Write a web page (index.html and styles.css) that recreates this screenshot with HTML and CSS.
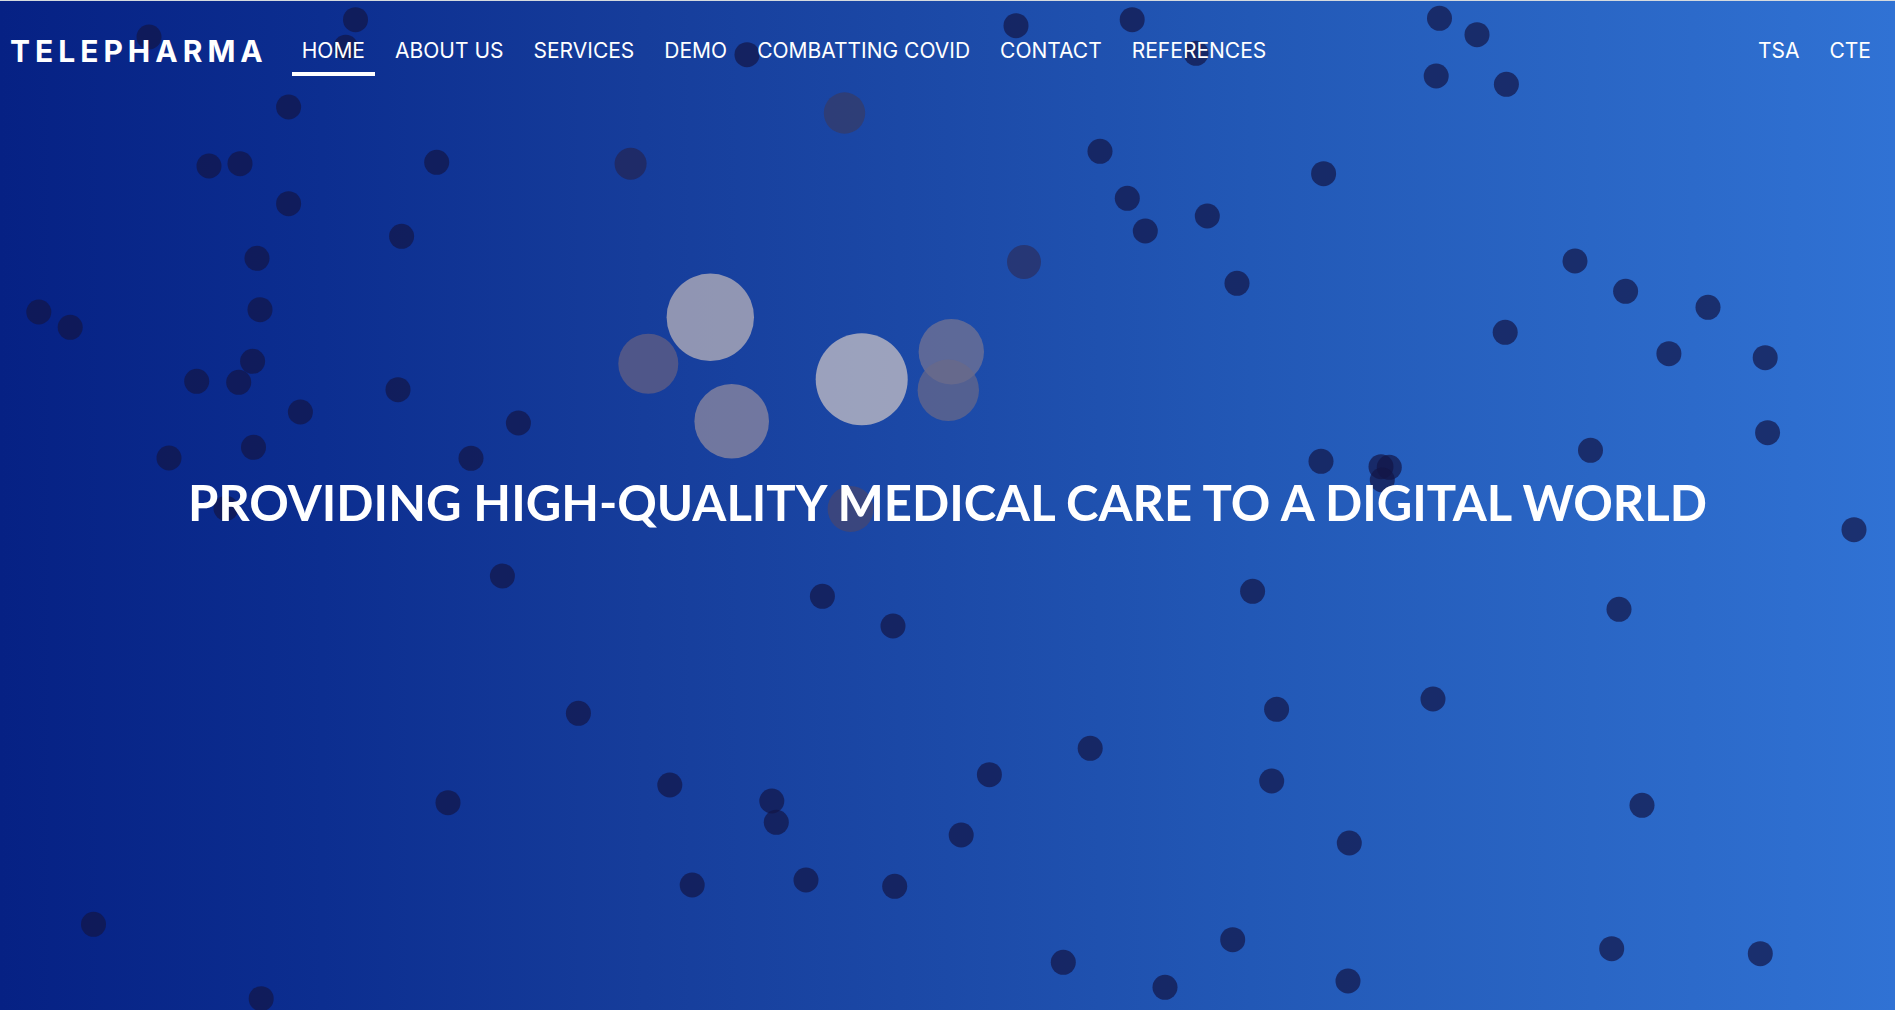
FILE: index.html
```html
<!DOCTYPE html>
<html lang="en">
<head>
<meta charset="utf-8">
<title>Telepharma</title>
<link rel="stylesheet" href="styles.css">
</head>
<body>
<div class="page">
  <svg class="bubbles" viewBox="0 0 1895 1010" preserveAspectRatio="xMidYMid slice" aria-hidden="true">
    <g class="bubbles-small">
      <circle cx="149" cy="37" r="12.5"/><circle cx="355.500" cy="19.700" r="12.500"/><circle cx="345.700" cy="47.300" r="12.500"/>
      <circle cx="288.600" cy="107" r="12.500"/><circle cx="209" cy="166" r="12.500"/><circle cx="240" cy="163.700" r="12.500"/>
      <circle cx="436.700" cy="162.300" r="12.500"/><circle cx="288.600" cy="203.700" r="12.500"/><circle cx="401.600" cy="236.300" r="12.500"/>
      <circle cx="257" cy="258.300" r="12.500"/><circle cx="260" cy="309.700" r="12.500"/><circle cx="38.800" cy="312" r="12.500"/>
      <circle cx="70.200" cy="327.300" r="12.500"/><circle cx="747" cy="54.700" r="12.500"/><circle cx="1016" cy="25.700" r="12.500"/>
      <circle cx="1132.200" cy="19.700" r="12.500"/><circle cx="1196" cy="53.300" r="12.500"/><circle cx="1100" cy="151.300" r="12.500"/>
      <circle cx="1127.300" cy="198.300" r="12.500"/><circle cx="1145.300" cy="231" r="12.500"/><circle cx="1207.300" cy="216" r="12.500"/>
      <circle cx="1237" cy="283.300" r="12.500"/><circle cx="1439.500" cy="18.300" r="12.500"/><circle cx="1477" cy="34.700" r="12.500"/>
      <circle cx="1436.200" cy="76" r="12.500"/><circle cx="1506.400" cy="84.300" r="12.500"/><circle cx="1323.600" cy="173.700" r="12.500"/>
      <circle cx="1575" cy="261" r="12.500"/><circle cx="1625.600" cy="291.300" r="12.500"/><circle cx="1708" cy="307.300" r="12.500"/>
      <circle cx="1505.200" cy="332.300" r="12.500"/><circle cx="252.600" cy="361.300" r="12.500"/><circle cx="196.700" cy="381.300" r="12.500"/>
      <circle cx="238.700" cy="382.300" r="12.500"/><circle cx="300.400" cy="412" r="12.500"/><circle cx="398" cy="389.700" r="12.500"/>
      <circle cx="518.400" cy="423" r="12.500"/><circle cx="169" cy="458" r="12.500"/><circle cx="253.500" cy="447.300" r="12.500"/>
      <circle cx="471" cy="458.300" r="12.500"/><circle cx="226" cy="508.300" r="12.500"/><circle cx="502.400" cy="576" r="12.500"/>
      <circle cx="822.400" cy="596.300" r="12.500"/><circle cx="893" cy="626" r="12.500"/><circle cx="1252.600" cy="591.300" r="12.500"/>
      <circle cx="1668.900" cy="353.700" r="12.500"/><circle cx="1765.200" cy="357.700" r="12.500"/><circle cx="1767.600" cy="432.700" r="12.500"/>
      <circle cx="1590.500" cy="450.300" r="12.500"/><circle cx="1321" cy="461.300" r="12.500"/><circle cx="1381" cy="466.700" r="12.500"/>
      <circle cx="1389.300" cy="467.300" r="12.500"/><circle cx="1382.300" cy="480" r="12.500"/><circle cx="1854" cy="529.700" r="12.500"/>
      <circle cx="1619" cy="609.300" r="12.500"/><circle cx="578.400" cy="713.300" r="12.500"/><circle cx="448" cy="802.700" r="12.500"/>
      <circle cx="93.500" cy="924.300" r="12.500"/><circle cx="261.200" cy="998.700" r="12.500"/><circle cx="669.800" cy="785" r="12.500"/>
      <circle cx="771.800" cy="801" r="12.500"/><circle cx="776.300" cy="822.300" r="12.500"/><circle cx="692.200" cy="885" r="12.500"/>
      <circle cx="806" cy="880" r="12.500"/><circle cx="894.700" cy="886.300" r="12.500"/><circle cx="961.200" cy="835" r="12.500"/>
      <circle cx="989.400" cy="774.700" r="12.500"/><circle cx="1090.200" cy="748.300" r="12.500"/><circle cx="1063.300" cy="962.300" r="12.500"/>
      <circle cx="1165" cy="987.300" r="12.500"/><circle cx="1232.700" cy="939.700" r="12.500"/><circle cx="1276.600" cy="709.300" r="12.500"/>
      <circle cx="1433" cy="699" r="12.500"/><circle cx="1271.700" cy="781" r="12.500"/><circle cx="1349.300" cy="843" r="12.500"/>
      <circle cx="1642" cy="805.300" r="12.500"/><circle cx="1611.700" cy="948.700" r="12.500"/><circle cx="1760.300" cy="953.700" r="12.500"/>
      <circle cx="1348" cy="981" r="12.500"/>
    </g>
    <g class="bubbles-large">
      <circle cx="630.600" cy="163.700" r="16" fill="#242452"/>
      <circle cx="1024" cy="262" r="17" fill="#2b2e60"/>
      <circle cx="844.500" cy="113" r="20.700" fill="#383b64"/>
      <circle cx="850.600" cy="509" r="23" fill="#49466e"/>
      <circle cx="648.300" cy="363.700" r="30" fill="#686181"/>
      <circle cx="731.700" cy="421.300" r="37.300" fill="#978fa0"/>
      <circle cx="710.300" cy="317.300" r="43.700" fill="#c5babc"/>
      <circle cx="861.700" cy="379.300" r="46" fill="#d3c9c8"/>
      <circle cx="951.300" cy="351.700" r="32.700" fill="#797692"/>
      <circle cx="948.300" cy="390.300" r="30.700" fill="#6b6a88"/>
    </g>
  </svg>
  <header class="header">
    <a class="brand" href="#">TELEPHARMA</a>
    <nav class="nav" aria-label="Main">
      <a class="nav-link nav-link-active" href="#home">HOME</a>
      <a class="nav-link" href="#about">ABOUT US</a>
      <a class="nav-link" href="#services">SERVICES</a>
      <a class="nav-link" href="#demo">DEMO</a>
      <a class="nav-link" href="#covid">COMBATTING COVID</a>
      <a class="nav-link" href="#contact">CONTACT</a>
      <a class="nav-link" href="#references">REFERENCES</a>
    </nav>
    <nav class="nav nav-end" aria-label="Partners">
      <a class="nav-link" href="#tsa">TSA</a>
      <a class="nav-link" href="#cte">CTE</a>
    </nav>
  </header>
  <main class="hero">
    <h1 class="hero-title">PROVIDING HIGH-QUALITY MEDICAL CARE TO A DIGITAL WORLD</h1>
  </main>
</div>
</body>
</html>
```
FILE: styles.css
```css
* {
  box-sizing: border-box;
}

body {
  margin: 0;
  color: #fff;
  font-family: Inter, "Liberation Sans", sans-serif;
}

.page {
  position: relative;
  display: flex;
  flex-direction: column;
  min-height: 100vh;
  overflow: hidden;
  border-top: 1px solid #d5dade;
  background: linear-gradient(90deg, #062184 0%, #0c2e90 17%, #163d9b 34%, #1c4aa8 50%, #2258b6 66%, #2a66c5 84%, #3072d4 100%);
}

.bubbles {
  position: absolute;
  top: -1px;
  left: 0;
  width: 100%;
  height: 100vh;
}

.bubbles-small {
  fill: #121646;
  fill-opacity: 0.7;
}

.bubbles-large {
  fill-opacity: 0.7;
}

.header {
  position: relative;
  display: flex;
  align-items: center;
  height: 100px;
  padding: 0 14px 0 10px;
}

.brand {
  margin-right: 24px;
  color: inherit;
  font-size: 30px;
  font-weight: 700;
  line-height: 36px;
  letter-spacing: 5px;
  text-decoration: none;
}

.nav {
  display: flex;
  gap: 10px;
}

.nav-end {
  margin-left: auto;
}

.nav-link {
  padding: 10px 10px 6px;
  border-bottom: 4px solid transparent;
  color: inherit;
  font-size: 21px;
  line-height: 30px;
  text-decoration: none;
}

.nav-link-active {
  border-bottom-color: #fff;
}

.hero {
  position: relative;
  flex: 1;
  display: flex;
  align-items: center;
  justify-content: center;
  padding: 0 20px 108px;
}

.hero-title {
  margin: 0;
  font-family: Lato, "Liberation Sans", sans-serif;
  font-size: 49px;
  font-weight: 700;
  line-height: 64px;
  text-align: center;
}
```
